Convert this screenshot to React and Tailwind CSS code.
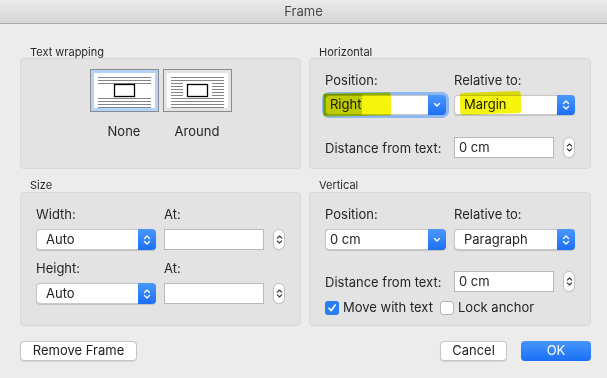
import React from "react";

const font = { fontFamily: 'Inter, "Liberation Sans", Arial, sans-serif' };

function Lines({ variant }) {
  const full = variant === "none" ? [4, 7, 10, 25, 28, 31, 34] : [4, 7, 25, 28, 31, 34];
  const split = variant === "none" ? [] : [10, 13, 16, 19, 22];
  return (
    <svg width="61" height="36" viewBox="0 0 61 36" className="block">
      {full.map((y) => (
        <rect key={"f" + y} x="4" y={y} width="53" height="1" fill="#858585" />
      ))}
      {split.map((y) => (
        <g key={"s" + y}>
          <rect x="4" y={y} width="12" height="1" fill="#858585" />
          <rect x="45" y={y} width="12" height="1" fill="#858585" />
        </g>
      ))}
      <rect x="20.5" y="11.5" width="20" height="12" fill="white" stroke="#000" strokeWidth="1.3" />
    </svg>
  );
}

function WrapIcon({ variant, selected }) {
  return (
    <div
      className={`border border-[#8c8c8c] p-[3px] ${selected ? "bg-[#b4d3f9]" : "bg-[#e4e4e4]"}`}
    >
      <div className="bg-white w-[61px] h-[35px] overflow-hidden">
        <Lines variant={variant} />
      </div>
    </div>
  );
}

function UpDown({ color = "white", w = 8, h = 12 }) {
  return (
    <svg width={w} height={h} viewBox="0 0 8 12">
      <path d="M1.5 4.5 L4 2 L6.5 4.5" fill="none" stroke={color} strokeWidth="1.3" strokeLinecap="round" strokeLinejoin="round" />
      <path d="M1.5 7.5 L4 10 L6.5 7.5" fill="none" stroke={color} strokeWidth="1.3" strokeLinecap="round" strokeLinejoin="round" />
    </svg>
  );
}

function Down() {
  return (
    <svg width="8" height="6" viewBox="0 0 8 6">
      <path d="M1.5 1.5 L4 4 L6.5 1.5" fill="none" stroke="white" strokeWidth="1.4" strokeLinecap="round" strokeLinejoin="round" />
    </svg>
  );
}

function PopUp({ value, width, height = 21, combo = false, focus = false }) {
  return (
    <div
      className={`flex bg-white rounded-[4px] border border-[#c9c9c9] shadow-[0_0.5px_1px_rgba(0,0,0,0.15)] ${
        focus ? "ring-[3px] ring-[#8db8f3] border-[#6fa3ee]" : ""
      }`}
      style={{ width, height }}
    >
      <div className={`flex-1 flex items-center text-[13px] text-[#222] ${combo ? "pl-[4px]" : "pl-[9px]"}`}>
        {value}
      </div>
      <div className="w-[18px] -my-px -mr-px rounded-r-[4px] bg-gradient-to-b from-[#4a98fb] to-[#1b6ef4] flex items-center justify-center">
        {combo ? <Down /> : <UpDown />}
      </div>
    </div>
  );
}

function Field({ value = "", width = 100, height = 21 }) {
  return (
    <div
      className="bg-white border border-[#b9b9b9] flex items-center pl-[4px] text-[13px] text-[#222]"
      style={{ width, height }}
    >
      {value}
    </div>
  );
}

function Stepper() {
  return (
    <div className="w-[12px] h-[21px] bg-white border border-[#c3c3c3] rounded-[6px] flex items-center justify-center shadow-[0_0.5px_1px_rgba(0,0,0,0.1)]">
      <UpDown color="#333" w={7} h={13} />
    </div>
  );
}

function GroupLabel({ children }) {
  return <div className="text-[11px] leading-[12px] text-[#2a2a2a] pl-[10px] h-[12px]">{children}</div>;
}

function Box({ children, className = "" }) {
  return (
    <div className={`bg-[#e3e3e3] border border-[#d9d9d9] rounded-[4px] ${className}`}>{children}</div>
  );
}

function Label({ children, className = "" }) {
  return <div className={`text-[13px] leading-[16px] text-[#262626] ${className}`}>{children}</div>;
}

function Btn({ children, width, primary = false }) {
  return (
    <div
      className={`h-[20px] rounded-[4px] flex items-center justify-center text-[13px] ${
        primary
          ? "bg-gradient-to-b from-[#4597fb] to-[#1a6ef5] text-white"
          : "bg-white border border-[#c6c6c6] text-[#222] shadow-[0_0.5px_1px_rgba(0,0,0,0.1)]"
      }`}
      style={{ width }}
    >
      {children}
    </div>
  );
}

export default function App() {
  return (
    <div className="w-[607px] h-[378px] bg-[#ececec] overflow-hidden relative" style={font}>
      <div className="h-[24px] bg-gradient-to-b from-[#ebebeb] to-[#d4d4d4] border-b border-[#a9a9a9] rounded-t-[5px] flex items-center justify-center text-[13px] text-[#4a4a4a]">
        Frame
      </div>

      <div className="pl-[20px] pr-[16px]">
        <div className="grid grid-cols-[281px_282px] gap-x-[8px] mt-[22px]">
          <div>
            <GroupLabel>Text wrapping</GroupLabel>
            <Box className="h-[111px] flex flex-col items-center pt-[10px]">
              <div className="flex gap-[4px]">
                <WrapIcon variant="none" selected />
                <WrapIcon variant="around" />
              </div>
              <div className="flex gap-[4px] mt-[11px]">
                <Label className="w-[69px] text-center">None</Label>
                <Label className="w-[69px] text-center">Around</Label>
              </div>
            </Box>
          </div>

          <div>
            <GroupLabel>Horizontal</GroupLabel>
            <Box className="h-[111px] pl-[15px] pt-[13px]">
              <div className="flex gap-[8px]">
                <Label className="w-[121px]">Position:</Label>
                <Label>Relative to:</Label>
              </div>
              <div className="flex gap-[8px] mt-[7px] relative">
                <PopUp value="Right" width={121} height={20} combo focus />
                <PopUp value="Margin" width={121} height={20} />
                <div className="absolute left-[-2px] top-[-2px] w-[68px] h-[23px] bg-[#f4f40c] mix-blend-multiply rounded-[2px] -rotate-1"></div>
                <div className="absolute left-[-1px] top-[-1px] w-[38px] h-[21px] bg-[#c8d600] mix-blend-multiply"></div>
                <div className="absolute left-[135px] top-[-3px] w-[61px] h-[22px] bg-[#f4f40c] mix-blend-multiply rounded-[3px] -rotate-2"></div>
              </div>
              <div className="flex items-center mt-[22px]">
                <Label className="w-[129px]">Distance from text:</Label>
                <Field value="0 cm" width={100} />
                <div className="ml-[9px]">
                  <Stepper />
                </div>
              </div>
            </Box>
          </div>

          <div className="mt-[10px]">
            <GroupLabel>Size</GroupLabel>
            <Box className="h-[134px] mt-px pl-[15px] pt-[13px]">
              <div className="flex gap-[8px]">
                <Label className="w-[120px]">Width:</Label>
                <Label>At:</Label>
              </div>
              <div className="flex items-center gap-[8px] mt-[7px]">
                <PopUp value="Auto" width={120} />
                <Field width={100} />
                <div className="ml-px">
                  <Stepper />
                </div>
              </div>
              <div className="flex gap-[8px] mt-[10px]">
                <Label className="w-[120px]">Height:</Label>
                <Label>At:</Label>
              </div>
              <div className="flex items-center gap-[8px] mt-[7px]">
                <PopUp value="Auto" width={120} />
                <Field width={100} />
                <div className="ml-px">
                  <Stepper />
                </div>
              </div>
            </Box>
          </div>

          <div className="mt-[10px]">
            <GroupLabel>Vertical</GroupLabel>
            <Box className="h-[134px] mt-px pl-[15px] pt-[13px]">
              <div className="flex gap-[8px]">
                <Label className="w-[121px]">Position:</Label>
                <Label>Relative to:</Label>
              </div>
              <div className="flex gap-[8px] mt-[7px]">
                <PopUp value="0 cm" width={121} combo />
                <PopUp value="Paragraph" width={121} />
              </div>
              <div className="flex items-center mt-[21px]">
                <Label className="w-[129px]">Distance from text:</Label>
                <Field value="0 cm" width={100} />
                <div className="ml-[9px]">
                  <Stepper />
                </div>
              </div>
              <div className="flex items-center mt-[6px] text-[13px] text-[#262626]">
                <div className="w-[14px] h-[14px] rounded-[3px] bg-[#2a7ff6] flex items-center justify-center">
                  <svg width="10" height="10" viewBox="0 0 10 10">
                    <path d="M2 5.3 L4.2 7.6 L8.2 2" fill="none" stroke="white" strokeWidth="1.6" strokeLinecap="round" strokeLinejoin="round" />
                  </svg>
                </div>
                <span className="ml-[4px]">Move with text</span>
                <div className="w-[14px] h-[14px] rounded-[3px] bg-white border border-[#b5b5b5] ml-[7px]"></div>
                <span className="ml-[4px]">Lock anchor</span>
              </div>
            </Box>
          </div>
        </div>

        <div className="flex items-center mt-[15px]">
          <Btn width={117}>Remove Frame</Btn>
          <div className="flex-1"></div>
          <Btn width={67}>Cancel</Btn>
          <div className="w-[14px]"></div>
          <Btn width={70} primary>OK</Btn>
        </div>
      </div>
    </div>
  );
}
